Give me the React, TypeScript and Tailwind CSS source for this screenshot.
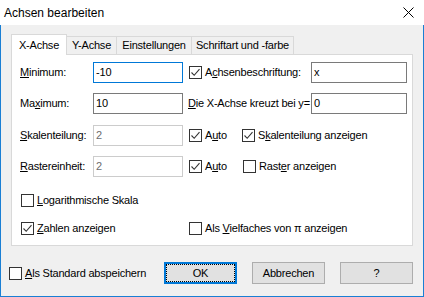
import type { ReactNode } from 'react';

const font = { fontFamily: '"Liberation Sans", Arial, sans-serif' };

function Check({ checked }: { checked?: boolean }) {
  return (
    <span className="w-[13px] h-[13px] shrink-0 border border-[#333333] bg-white flex items-center justify-center">
      {checked && (
        <svg width="11" height="11" viewBox="0 0 11 11">
          <path d="M1.5 5.5 L4.2 8.3 L9.5 2.2" fill="none" stroke="#333333" strokeWidth="1.1" />
        </svg>
      )}
    </span>
  );
}

function CheckLabel({ checked, children, className = '' }: { checked?: boolean; children: ReactNode; className?: string }) {
  return (
    <div className={`flex items-center gap-[3px] ${className}`}>
      <Check checked={checked} />
      <span className="whitespace-nowrap">{children}</span>
    </div>
  );
}

function Field({ value, focused, disabled, width = 'w-[90px]' }: { value: string; focused?: boolean; disabled?: boolean; width?: string }) {
  const border = focused ? 'border-[#0078d7]' : disabled ? 'border-[#cccccc]' : 'border-[#7a7a7a]';
  return (
    <div className={`${width} h-[21px] shrink-0 border ${border} bg-white flex items-center pl-[2px] ${disabled ? 'text-[#6d6d6d]' : 'text-black'}`}>
      {value}
    </div>
  );
}

function Button({ children, focused }: { children: ReactNode; focused?: boolean }) {
  return (
    <div
      className={`relative w-[73px] h-[22px] bg-[#e1e1e1] flex items-center justify-center text-black ${
        focused ? 'border-2 border-[#0078d7]' : 'border border-[#adadad]'
      }`}
    >
      {focused && <span className="absolute inset-0 border border-dotted border-black" />}
      <span className="relative">{children}</span>
    </div>
  );
}

export default function App() {
  const tabs = [
    { label: 'Y-Achse', w: 'w-[50px]' },
    { label: 'Einstellungen', w: 'w-[75px]' },
    { label: 'Schriftart und -farbe', w: 'w-[102px]' },
  ];

  return (
    <div className="w-[424px] h-[297px] flex flex-col text-[11px] tracking-[-0.2px] text-black" style={font}>
      {/* title bar */}
      <div className="h-[25px] bg-white flex items-center justify-between pl-[4px] pr-[10px]">
        <span className="text-[12px] tracking-normal">Achsen bearbeiten</span>
        <svg width="11" height="11" viewBox="0 0 11 11">
          <path d="M0.5 0.5 L10.5 10.5 M10.5 0.5 L0.5 10.5" stroke="#000" strokeWidth="1" />
        </svg>
      </div>

      <div className="flex-1 bg-[#f0f0f0] border-x border-b border-[#1a7fd4] px-[10px] flex flex-col">
        {/* tabs */}
        <div className="mt-[9px] h-[21px] flex items-end">
          <div className="relative z-10 w-[56px] h-[21px] bg-white border-l border-t border-r border-[#d9d9d9] flex items-center justify-center">
            X-Achse
          </div>
          {tabs.map((t) => (
            <div
              key={t.label}
              className={`${t.w} h-[18px] mb-[1px] bg-[#f0f0f0] border-t border-r border-[#d9d9d9] flex items-center justify-center whitespace-nowrap`}
            >
              {t.label}
            </div>
          ))}
        </div>

        {/* panel */}
        <div className="-mt-px h-[192px] bg-white border border-[#d9d9d9] pt-[7px] pl-[8px] flex flex-col">
          <div className="h-[21px] flex items-center">
            <span className="w-[73px]"><u>M</u>inimum:</span>
            <Field value="-10" focused />
            <CheckLabel checked className="ml-[6px] w-[122px]">
              A<u>c</u>hsenbeschriftung:
            </CheckLabel>
            <Field value="x" width="w-[96px]" />
          </div>

          <div className="mt-[10px] h-[21px] flex items-center">
            <span className="w-[73px]">Ma<u>x</u>imum:</span>
            <Field value="10" />
            <span className="ml-[5px] w-[123px] whitespace-nowrap">
              <u>D</u>ie X-Achse kreuzt bei y=
            </span>
            <Field value="0" width="w-[96px]" />
          </div>

          <div className="mt-[11px] h-[21px] flex items-center">
            <span className="w-[73px]"><u>S</u>kalenteilung:</span>
            <Field value="2" disabled />
            <CheckLabel checked className="ml-[6px] w-[53px]">
              A<u>u</u>to
            </CheckLabel>
            <CheckLabel checked>
              S<u>k</u>alenteilung anzeigen
            </CheckLabel>
          </div>

          <div className="mt-[10px] h-[21px] flex items-center">
            <span className="w-[73px]"><u>R</u>astereinheit:</span>
            <Field value="2" disabled />
            <CheckLabel checked className="ml-[6px] w-[54px]">
              A<u>u</u>to
            </CheckLabel>
            <CheckLabel>
              Rast<u>e</u>r anzeigen
            </CheckLabel>
          </div>

          <div className="mt-[13px] h-[21px] flex items-center pl-[1px]">
            <CheckLabel>
              <u>L</u>ogarithmische Skala
            </CheckLabel>
          </div>

          <div className="mt-[7px] h-[21px] flex items-center pl-[1px]">
            <CheckLabel checked className="w-[168px]">
              <u>Z</u>ahlen anzeigen
            </CheckLabel>
            <CheckLabel>
              Als <u>V</u>ielfaches von π anzeigen
            </CheckLabel>
          </div>
        </div>

        {/* bottom */}
        <div className="mt-[16px] h-[22px] flex items-center">
          <CheckLabel className="-ml-[2px] w-[156px]">
            <u>A</u>ls Standard abspeichern
          </CheckLabel>
          <div className="flex gap-[15px]">
            <Button focused>OK</Button>
            <Button>Abbrechen</Button>
            <Button>?</Button>
          </div>
        </div>
      </div>
    </div>
  );
}
